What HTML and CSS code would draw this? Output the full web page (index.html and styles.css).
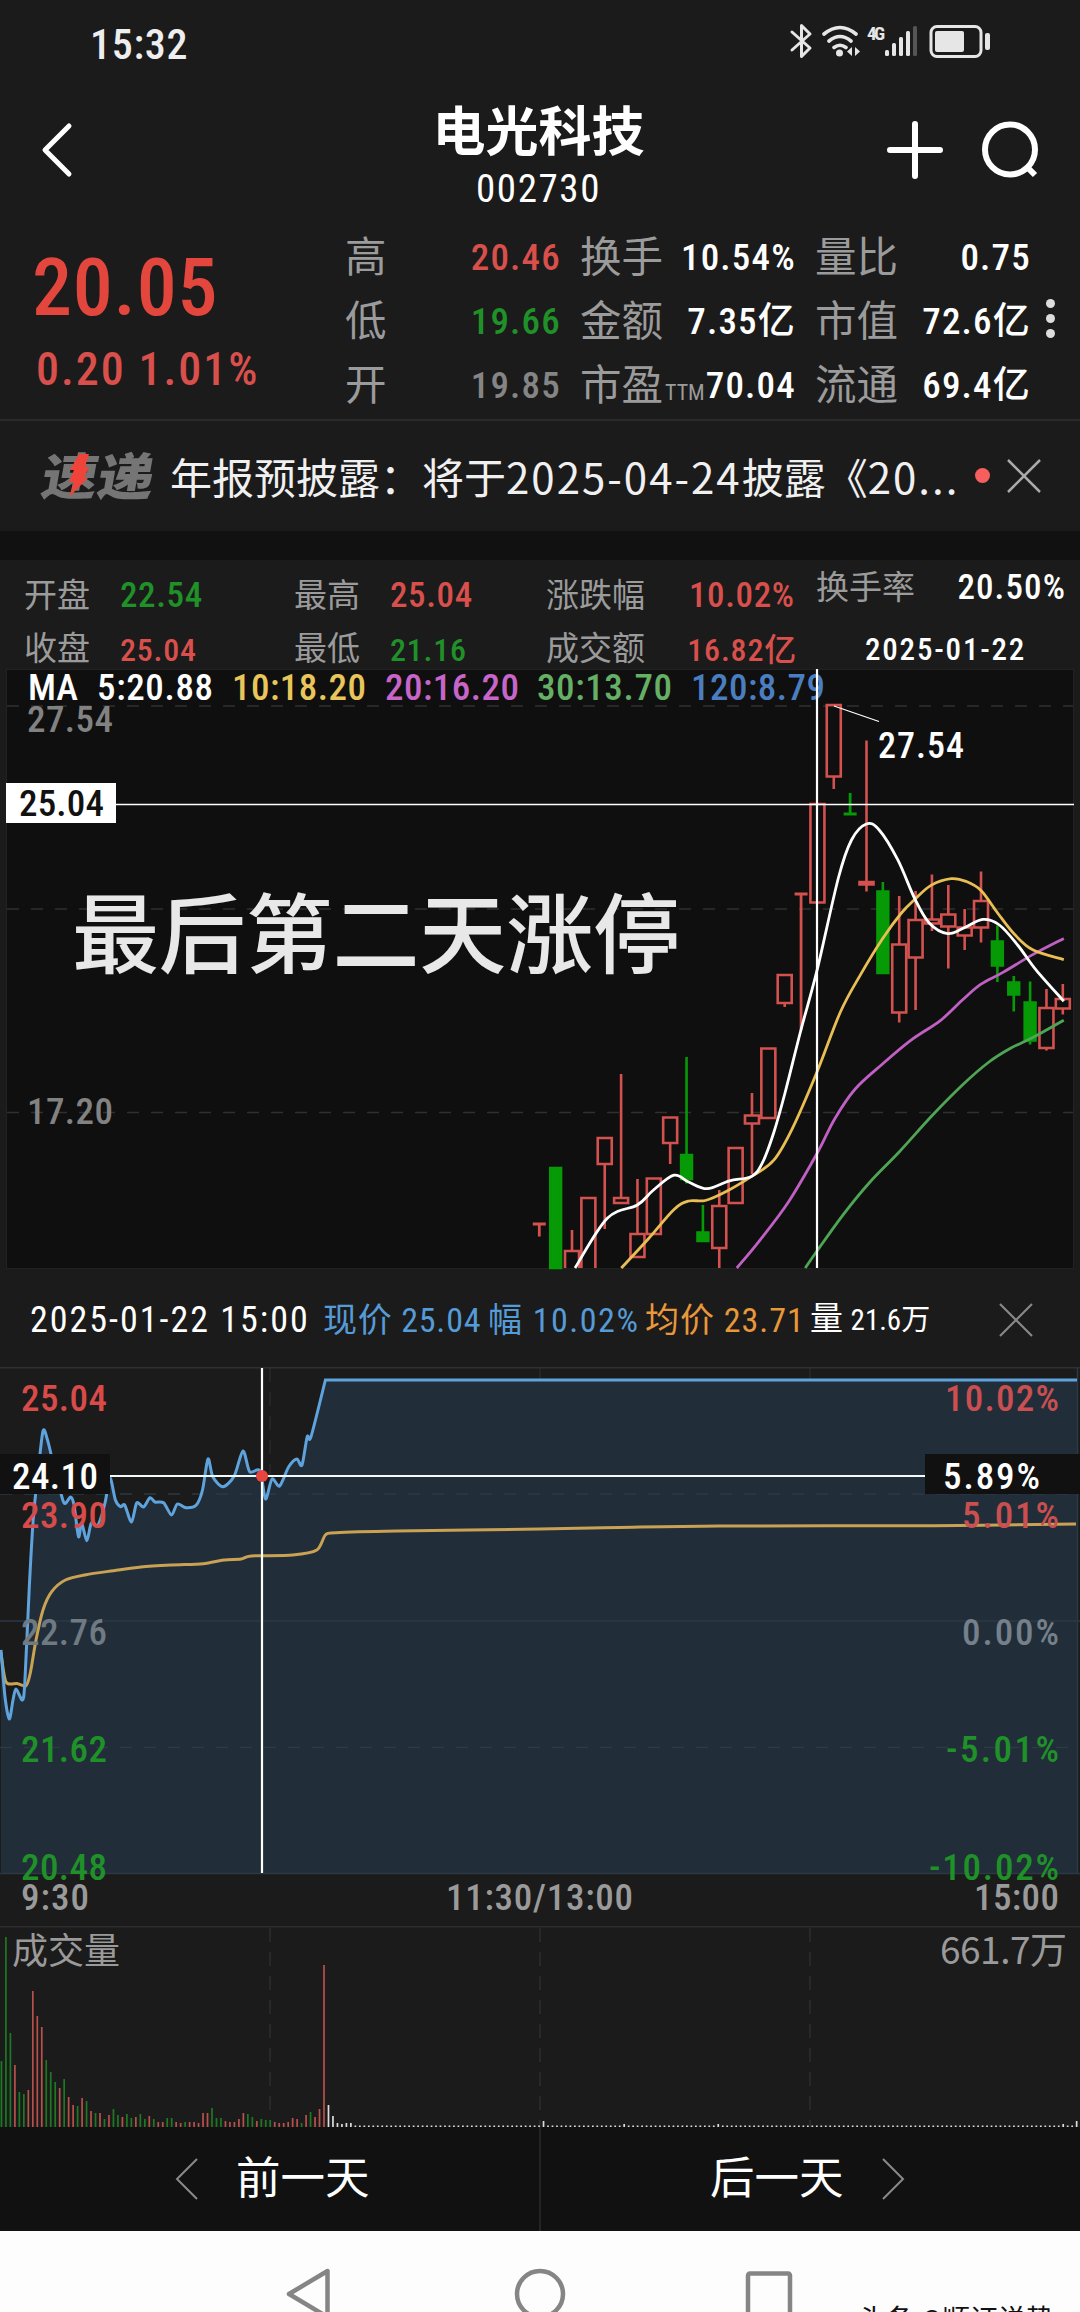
FILE: index.html
```html
<!doctype html>
<html lang="zh-CN">
  <head>
    <title>电光科技 002730</title>
    <meta charset="utf-8">
    <meta name="viewport" content="width=device-width, initial-scale=1">
    <link rel="stylesheet" href="styles.css">
  </head>
  <body>
    <div class="status">
      <span class="clock">15:32</span>
      <svg class="status-icons" width="204" height="40" viewBox="788 20 204 40">
        <g fill="none" stroke="#e6e6e6" stroke-width="3" stroke-linejoin="round" stroke-linecap="round">
          <path d="M792 32l18 16-8.500 8.500V25.500l8.500 8.500-18 16"/>
          <path d="M824 34q16-13 32 0M829 41q11-9 22 0M834 47.500q6-4.500 12 0" stroke-width="3.600"/>
          <rect x="931" y="26.500" width="50" height="30" rx="6"/>
        </g>
        <g fill="#e6e6e6">
          <circle cx="839.500" cy="53" r="3.500"/>
          <path d="M852 47v9l-5-4.500zM855 47v9l5-4.500z"/>
          <rect x="885" y="50" width="4" height="6" rx="1.500"/>
          <rect x="892" y="43" width="4" height="13" rx="1.500"/>
          <rect x="899" y="37" width="4" height="19" rx="1.500"/>
          <rect x="906" y="31" width="4" height="25" rx="1.500"/>
          <rect x="913" y="26" width="4" height="30" rx="1.500" fill="#555"/>
          <rect x="935" y="31" width="29" height="21" rx="2"/>
          <rect x="985" y="33" width="5" height="17" rx="2"/>
          <text x="867" y="39.500" font-size="19" font-weight="700" textLength="18">4G</text>
        </g>
      </svg>
    </div>

    <header class="topbar">
      <svg class="back" width="36" height="56" viewBox="0 0 36 56">
        <path d="M30 4L6 28l24 24" fill="none" stroke="#fff" stroke-width="5" stroke-linecap="round" stroke-linejoin="round"/>
      </svg>
      <div class="title">
        <h1>电光科技</h1>
        <p>002730</p>
      </div>
      <div class="actions">
        <svg width="56" height="60" viewBox="0 0 56 60">
          <path d="M28 4v52M3 30h50" stroke="#fff" stroke-width="6" stroke-linecap="round"/>
        </svg>
        <svg width="60" height="60" viewBox="0 0 60 60">
          <circle cx="30" cy="29.500" r="25" fill="none" stroke="#fff" stroke-width="6"/>
          <path d="M48 48l7 7" stroke="#fff" stroke-width="6"/>
        </svg>
      </div>
    </header>

    <section class="quote">
      <div class="price up">
        <div class="last">20.05</div>
        <div class="change"><span>0.20</span> <span>1.01%</span></div>
      </div>
      <dl>
        <div><dt>高</dt><dd class="up">20.46</dd></div>
        <div><dt>低</dt><dd class="down">19.66</dd></div>
        <div><dt>开</dt><dd class="flat">19.85</dd></div>
      </dl>
      <dl>
        <div><dt>换手</dt><dd>10.54%</dd></div>
        <div><dt>金额</dt><dd>7.35亿</dd></div>
        <div><dt>市盈<small>TTM</small></dt><dd>70.04</dd></div>
      </dl>
      <dl>
        <div><dt>量比</dt><dd>0.75</dd></div>
        <div><dt>市值</dt><dd>72.6亿</dd></div>
        <div><dt>流通</dt><dd>69.4亿</dd></div>
      </dl>
      <div class="more"><i></i><i></i><i></i></div>
    </section>

    <section class="news">
      <svg class="badge" width="120" height="60" viewBox="0 0 120 60">
        <text x="8" y="49" font-size="50" font-weight="900" fill="#757575" textLength="112" lengthAdjust="spacingAndGlyphs" transform="skewX(-10)">速递</text>
        <path d="M39 8h10l-4 13h4l-5 11h4L29 51l5-15h-5l5-12h-4z" fill="#f0443a"/>
      </svg>
      <p>年报预披露：将于<span>2025-04-24</span>披露《<span>20...</span></p>
      <i class="unread"></i>
      <svg width="34" height="34" viewBox="0 0 34 34">
        <path d="M1 1l32 32M33 1L1 33" stroke="#aaa" stroke-width="2.500"/>
      </svg>
    </section>

    <section class="day">
      <dl>
        <div><dt>开盘</dt><dd class="down">22.54</dd></div>
        <div><dt>收盘</dt><dd class="up small">25.04</dd></div>
      </dl>
      <dl>
        <div><dt>最高</dt><dd class="up">25.04</dd></div>
        <div><dt>最低</dt><dd class="down small">21.16</dd></div>
      </dl>
      <dl class="wide">
        <div><dt>涨跌幅</dt><dd class="up">10.02%</dd></div>
        <div><dt>成交额</dt><dd class="up small">16.82亿</dd></div>
      </dl>
      <div class="turnover">
        <p><span>换手率</span><b>20.50%</b></p>
        <p class="date">2025-01-22</p>
      </div>
    </section>

    <svg class="chart" id="kline" width="1080" height="604" viewBox="0 668 1080 604">
      <rect x="6.500" y="669.500" width="1067" height="599" fill="#0f0f0f" stroke="#222"/>
      <path d="M7 706h1066M7 909h1066M7 1112.500h1066" stroke="#303030" stroke-width="1.500" stroke-dasharray="12 12"/>
      <g class="num" font-size="37">
        <text x="28" y="699.500" fill="#fff" textLength="50" lengthAdjust="spacingAndGlyphs">MA</text>
        <text x="97" y="699.500" fill="#fff" textLength="116">5:20.88</text>
        <text x="232" y="699.500" fill="#e8c65a" textLength="134">10:18.20</text>
        <text x="385" y="699.500" fill="#c765c9" textLength="134">20:16.20</text>
        <text x="537" y="699.500" fill="#66b066" textLength="135">30:13.70</text>
        <text x="691" y="699.500" fill="#4a7ec0" textLength="134">120:8.79</text>
        <text x="27" y="731.500" fill="#828282" textLength="86">27.54</text>
        <text x="27" y="1124" fill="#828282" textLength="86">17.20</text>
      </g>
      <text class="note" x="72" y="967" font-size="87" fill="#e8e8e8" textLength="608">最后第二天涨停</text>
      <g id="candles"></g>
      <g id="averages" fill="none"></g>
      <path d="M834 706l45 15.500" stroke="#fff" stroke-width="1.300"/>
      <text class="num" x="878" y="757.500" font-size="36" fill="#fff" textLength="86">27.54</text>
      <path d="M116 804.500h958" stroke="#fff" stroke-width="1.500"/>
      <path d="M817 669v599" stroke="#fff" stroke-width="2.200"/>
      <rect x="6" y="783" width="110" height="40" fill="#fff"/>
      <text class="num" x="19" y="816" font-size="37" fill="#111" textLength="85">25.04</text>
    </svg>

    <section class="minute-info">
      <span class="time">2025-01-22 15:00</span>
      <span class="blue">现价 25.04</span>
      <span class="blue amp">幅 10.02%</span>
      <span class="orange">均价 23.71</span>
      <span class="vol">量 <small>21.6万</small></span>
      <svg width="36" height="36" viewBox="0 0 36 36">
        <path d="M2 2l32 32M34 2L2 34" stroke="#888" stroke-width="2.200"/>
      </svg>
    </section>

    <svg class="chart" id="minute" width="1080" height="559" viewBox="0 1367 1080 559">
      <path d="M0 1367.500h1080" stroke="#303030" stroke-width="2"/>
      <path d="M270 1368v505M540 1368v505M810 1368v505" stroke="#303030" stroke-dasharray="14 10"/>
      <path id="area" fill="#212e3a"/>
      <path d="M0 1494h1077M0 1747.500h1077" stroke="#2d3a45" stroke-width="1.500" stroke-dasharray="12 12"/>
      <path d="M0 1621h1080M0 1873.500h1080M1077.500 1368v505" stroke="#2c3843" stroke-width="1.500"/>
      <path id="avg" fill="none" stroke="#c9a253" stroke-width="3"/>
      <path id="price" fill="none" stroke="#5fa3dc" stroke-width="3"/>
      <g class="num" font-size="37">
        <text x="21" y="1411" fill="#d84b48" textLength="86">25.04</text>
        <text x="21" y="1528" fill="#d84b48" textLength="86">23.90</text>
        <text x="21" y="1645" fill="#6f7a82" textLength="86">22.76</text>
        <text x="21" y="1762" fill="#1f9128" textLength="86">21.62</text>
        <text x="21" y="1880" fill="#1f9128" textLength="86">20.48</text>
        <text x="945" y="1411" fill="#c94f50" textLength="114">10.02%</text>
        <text x="962" y="1528" fill="#c94f50" textLength="97">5.01%</text>
        <text x="962" y="1645" fill="#75808a" textLength="97">0.00%</text>
        <text x="946" y="1762" fill="#1f9128" textLength="113">-5.01%</text>
        <text x="929" y="1880" fill="#1f9128" textLength="130">-10.02%</text>
        <text x="21" y="1910" fill="#9a9a9a" textLength="68">9:30</text>
        <text x="446" y="1910" fill="#9a9a9a" textLength="187">11:30/13:00</text>
        <text x="974" y="1910" fill="#9a9a9a" textLength="85">15:00</text>
      </g>
      <path d="M110 1476h816" stroke="#f4fafa" stroke-width="2.200"/>
      <path d="M262 1368v505" stroke="#fff" stroke-width="2.200"/>
      <circle cx="262" cy="1476" r="6" fill="#e8453f"/>
      <path d="M0 1454h110v40H0zM925 1454h155v40H925z" fill="#111"/>
      <g class="num" font-size="37" fill="#fff">
        <text x="12" y="1488.500" textLength="86">24.10</text>
        <text x="943" y="1488.500" textLength="97">5.89%</text>
      </g>
    </svg>

    <svg class="chart" id="volume" width="1080" height="201" viewBox="0 1926 1080 201">
      <path d="M0 1926.500h1080" stroke="#2d2d2d" stroke-width="2"/>
      <path d="M270 1928v199M540 1928v199M810 1928v199" stroke="#2e2e2e" stroke-width="1.500" stroke-dasharray="14 10"/>
      <g id="bars"></g>
      <g fill="#9a9a9a">
        <text class="cjk" x="12" y="1964" font-size="36">成交量</text>
        <text class="cjk" x="940" y="1964" font-size="37" textLength="127">661.7万</text>
      </g>
    </svg>

    <nav class="days">
      <a>
        <svg width="24" height="42" viewBox="0 0 24 42"><path d="M22 1L2 21l20 20" fill="none" stroke="#8a8a8a" stroke-width="2"/></svg>
        前一天
      </a>
      <a>
        后一天
        <svg width="24" height="42" viewBox="0 0 24 42"><path d="M2 1l20 20L2 41" fill="none" stroke="#8a8a8a" stroke-width="2"/></svg>
      </a>
    </nav>

    <footer class="system">
      <svg width="520" height="81" viewBox="280 2231 520 81">
        <g fill="none" stroke="#858585" stroke-width="4.500" stroke-linejoin="round">
          <path d="M327.500 2271v46L289 2294z"/>
          <circle cx="540" cy="2294" r="23"/>
          <rect x="748" y="2273.500" width="42" height="44" rx="2"/>
        </g>
      </svg>
      <span>头条 @顺证说势</span>
    </footer>

    <script src="charts.js"></script>
  </body>
</html>
```
FILE: styles.css
```css
* {
  box-sizing: border-box;
  margin: 0;
  padding: 0;
}
body {
  width: 1080px;
  height: 2312px;
  overflow: hidden;
  background: #1b1b1b;
  color: #fff;
  font-family: "Roboto Condensed", "Noto Sans CJK SC", sans-serif;
}
svg {
  display: block;
  flex: none;
}
i, b {
  font-style: normal;
}
.up { color: #d84f4b; }
.down { color: #1f9128; }
.flat { color: #858585; }
.num { font-weight: 500; }
.cjk { font-family: "Noto Sans CJK SC", sans-serif; }

/* system status */
.status {
  display: flex;
  justify-content: space-between;
  align-items: center;
  height: 88px;
  padding: 0 88px 0 90px;
}
.clock {
  font-size: 42px;
  font-weight: 500;
  letter-spacing: .7px;
  color: #eee;
}
.status-icons {
  margin-top: -8px;
}

.topbar {
  display: flex;
  justify-content: space-between;
  height: 117px;
  padding: 0 40px 0 39px;
}
.back {
  margin-top: 34px;
}
.title {
  margin-left: 115px;
  text-align: center;
}
.title h1 {
  margin-top: 8px;
  font-size: 53px;
  line-height: 74px;
  font-weight: 700;
}
.title p {
  font-size: 39px;
  line-height: 38px;
  letter-spacing: 1.600px;
}
.actions {
  display: flex;
  gap: 37px;
  margin-top: 32px;
}

/* quote */
.quote {
  display: flex;
  height: 216px;
  padding: 21px 0 0 32px;
  border-bottom: 2px solid #2b2b2b;
}
.price {
  width: 313px;
  font-weight: 500;
}
.last {
  font-size: 80px;
  line-height: 125px;
  letter-spacing: .8px;
  color: #e2463d;
}
.change {
  padding-left: 4px;
  font-size: 46px;
  line-height: 36px;
  letter-spacing: 2px;
}
.quote dl {
  width: 216px;
  margin-right: 19px;
}
.quote dl > div {
  display: flex;
  justify-content: space-between;
  height: 64px;
  line-height: 64px;
  white-space: nowrap;
}
dt {
  color: #9b9b9b;
  font-weight: 400;
}
.quote dt {
  font-size: 41.500px;
}
.quote dt small {
  margin-left: 2px;
  font-size: 22px;
}
.quote dd {
  font-size: 37px;
  font-weight: 500;
  letter-spacing: 1.2px;
}
.more {
  display: flex;
  flex-direction: column;
  gap: 6px;
  margin: 73px 0 0 -4px;
}
.more i {
  width: 9px;
  height: 9px;
  border-radius: 50%;
  background: #ddd;
}

/* news */
.news {
  display: flex;
  align-items: center;
  height: 110px;
  padding-left: 40px;
}
.badge {
  margin-right: 10px;
}
.news p {
  width: 788px;
  font: 42px/60px "Noto Sans CJK SC", sans-serif;
  color: #f0f0f0;
  white-space: nowrap;
  margin-top: -1px;
}
.news p span {
  letter-spacing: 2px;
}
.unread {
  width: 15px;
  height: 15px;
  margin: -2px 17px 0;
  border-radius: 50%;
  background: #f75f5e;
}

/* selected day */
.day {
  display: flex;
  height: 137px;
  padding: 10px 0 0 24px;
  border-top: 29px solid #111;
}
.day dl {
  width: 270px;
}
.day dl.wide {
  width: 251px;
  margin-left: -18px;
}
.day dl > div {
  display: flex;
  height: 53px;
  line-height: 52px;
  white-space: nowrap;
}
.day dt {
  width: 96px;
  font-size: 33px;
}
.day .wide dt {
  width: 143px;
}
.day dd {
  font-size: 35px;
  font-weight: 500;
  letter-spacing: .6px;
}
.day dd.small {
  padding-top: 1px;
  font-size: 32px;
  letter-spacing: .8px;
}
.turnover {
  width: 250px;
  margin-left: 19px;
}
.turnover p {
  display: flex;
  justify-content: space-between;
  height: 52px;
  font-size: 33px;
  line-height: 36px;
  color: #9b9b9b;
}
.turnover b {
  font-size: 35px;
  font-weight: 500;
  letter-spacing: 1.1px;
  color: #fff;
}
.turnover .date {
  padding: 2px 0 0 49px;
  font-size: 31px;
  line-height: 52px;
  font-weight: 500;
  letter-spacing: 1.8px;
  color: #fff;
  white-space: nowrap;
}

.note {
  font-family: "Noto Sans CJK SC", sans-serif;
  font-weight: 500;
}

/* minute chart legend */
.minute-info {
  display: flex;
  align-items: center;
  height: 95px;
  padding-left: 30px;
  font-size: 35px;
  line-height: 50px;
  white-space: nowrap;
}
.minute-info span {
  font-size: 33px;
}
.minute-info .time {
  width: 293px;
  font-size: 36px;
  letter-spacing: 2px;
}
.minute-info .blue {
  width: 165px;
  font-size: 34px;
  color: #559bd8;
  letter-spacing: .8px;
}
.minute-info .amp {
  width: 157px;
  letter-spacing: 1.5px;
}
.minute-info .orange {
  width: 165px;
  font-size: 34px;
  color: #e8973a;
  letter-spacing: 1px;
}
.minute-info .vol {
  width: 188px;
}
.minute-info small {
  font-size: 29px;
}

/* previous / next day */
.days {
  display: flex;
  height: 104px;
  background: #111;
}
.days a {
  display: flex;
  flex: none;
  width: 539px;
  align-items: center;
  gap: 37px;
  padding-left: 175px;
  font-size: 44.500px;
  line-height: 100px;
}
.days a + a {
  width: 541px;
  padding-left: 169px;
  border-left: 2px solid #242424;
}

.system {
  display: flex;
  height: 81px;
  padding-left: 280px;
  background: #fdfdfd;
  color: #111;
  overflow: hidden;
}
.system span {
  margin: 73px 0 0 58px;
  font-size: 28px;
  line-height: 34px;
  white-space: nowrap;
}
```
FILE: charts.js
```js
const RED = '#d3524f'
const GREEN = '#069a06'

// type, high, body top, body bottom, low
const candles = [
  ['r', 1224, 1224, 1224, 1236.5], ['g', 1168, 1168, 1268, 1268],
  ['r', 1230, 1251, 1270, 1270], ['r', 1198, 1198, 1270, 1270],
  ['r', 1138, 1138, 1164, 1229], ['r', 1074, 1198, 1203, 1203],
  ['r', 1179, 1234, 1257, 1257], ['r', 1178.5, 1178.5, 1234, 1234],
  ['r', 1117.5, 1117.5, 1143, 1164], ['g', 1057, 1155, 1179, 1183.5],
  ['g', 1205, 1232.5, 1241, 1241], ['r', 1190, 1206, 1248, 1268],
  ['r', 1148, 1148, 1203, 1203], ['r', 1093, 1115.5, 1123.5, 1174],
  ['r', 1048.5, 1048.5, 1118, 1118], ['r', 975, 975, 1003, 1007],
  ['r', 894, 894, 894, 1030.5], ['r', 804, 804, 902.5, 902.5],
  ['r', 705, 705, 776.5, 789], ['g', 793, 814, 814, 814],
  ['r', 740.5, 882, 884.5, 891.5], ['g', 882, 891.5, 973, 973],
  ['r', 896, 944.5, 1012.5, 1022.5], ['r', 891, 920, 957.5, 1010],
  ['r', 874.5, 919.5, 923.5, 931], ['r', 885, 914.5, 926.5, 968.5],
  ['r', 909, 927.5, 935.5, 950], ['r', 871.5, 901, 927.5, 942.5],
  ['g', 925.5, 941.5, 965.5, 982], ['g', 976, 982.5, 994.5, 1011.5],
  ['g', 981.5, 1002.5, 1040.5, 1044.5], ['r', 989, 1008, 1048, 1050.5],
  ['r', 984, 999, 1008.5, 1014.5],
]

const averages = {
  '#4fa556': [[805.2, 1268], [817, 1251], [844, 1213.6], [870, 1182], [899.6, 1151.5], [931.7, 1116], [962.4, 1085], [988.3, 1062.5], [1010.5, 1048.3], [1032.7, 1037.6], [1063.8, 1020.2]],
  '#c060c4': [[736.8, 1268], [759, 1241.3], [788.6, 1201.7], [817, 1153.5], [834.8, 1118.7], [855.2, 1089], [882.5, 1064], [910.7, 1040.4], [940.3, 1020.6], [962.4, 1000], [981, 984.2], [1003, 972.4], [1032.7, 954.6], [1063.8, 938.4]],
  '#e9be54': [[621.3, 1268], [648, 1239.3], [674, 1209.6], [688.7, 1201], [705.3, 1200.5], [725.7, 1191.8], [751.6, 1176.4], [773.8, 1160.2], [792.3, 1128.6], [817, 1072], [840.4, 1012], [860.7, 974.4], [882.5, 938.8], [901.4, 913], [915, 899.2], [931, 885.4], [951.3, 878.7], [966, 881.4], [981, 890.5], [997.6, 913], [1014.2, 934], [1032.7, 949.8], [1063.8, 959.7]],
  '#fff': [[575, 1268], [607.3, 1218.3], [637.3, 1205], [653.5, 1190], [674, 1175.2], [688.7, 1182], [707.2, 1188.7], [729.4, 1180.8], [751.6, 1176.4], [762.7, 1162.2], [773.8, 1132.5], [785, 1093], [800.8, 1030.5], [817, 970.4], [838.5, 877.5], [851.5, 840], [866.3, 824], [879.2, 830], [897.7, 859.7], [915, 899.2], [929.2, 923], [947.6, 933.6], [964.3, 927.7], [982.8, 919.4], [999.4, 925], [1018, 945.5], [1036.4, 970.4], [1063.8, 1001.2]],
}

const price = [[1, 1650], [5, 1697], [9.3, 1719], [13, 1700], [16, 1689], [22.4, 1700], [24.8, 1683], [29.3, 1587], [33.4, 1517], [38, 1473], [43, 1431], [47.5, 1440], [51.7, 1457], [57, 1477], [64, 1503], [70.6, 1497], [74, 1505], [78.5, 1536.7], [81.6, 1523], [86.8, 1540.7], [91.3, 1523], [98, 1525], [105, 1503], [110, 1478], [115.4, 1500], [120.5, 1506.7], [124.7, 1505], [131.5, 1522], [136.7, 1503], [143.6, 1507], [150, 1497.7], [155, 1502], [163.6, 1502.7], [171.5, 1515], [177.3, 1504], [186, 1507.7], [196.3, 1505], [202.5, 1490], [208, 1459], [212.8, 1476.7], [223, 1486.7], [234.2, 1476], [243, 1451], [249.7, 1471.7], [260, 1470.7], [265.5, 1499], [272, 1479], [279.6, 1486], [288.6, 1467], [296.8, 1459], [302, 1465], [307.2, 1436.7], [311, 1436.7], [325.4, 1380]]

const avg = [[1, 1653], [6, 1682], [17, 1683.5], [26, 1685.7], [30.3, 1673], [36, 1640], [43, 1610], [51.7, 1591.7], [65.4, 1580], [86, 1574.7], [113.6, 1570.7], [141, 1567], [172, 1565], [203, 1563.7], [223.8, 1560], [241, 1559], [251.4, 1556], [292.7, 1555], [316.8, 1550], [325.4, 1535], [335.7, 1532.7], [396, 1531], [540, 1529], [619, 1527.5], [719, 1526], [934, 1525.7], [1076, 1524]]

const volume = 'g66 g190 g94 r62 g35 g33 r37 r136 r111 r100 g67 g55 g45 r39 g48 r30 r22 g21 r29 g26 r16 g14 r14 g8 r12 g18 g12 r10 g13 g9 r10 g13 g8 r11 g8 r5 r5 g9 g9 r5 r4 g5 r5 r5 r4 r14 r14 g19 g9 g9 r6 r5 r5 r8 r14 g13 g10 r6 g8 g7 g7 r5 r4 r4 r5 r9 r8 g4 r12 g15 r10 r18 r162 w22 w11 w4 w3 w4 w4'.split(' ')
const spikes = {121: 6, 139: 3, 160: 3, 237: 3, 240: 6}

function smooth(points, k = 0.14) {
  let d = `M${points[0]}`
  for (let i = 0; i < points.length - 1; i++) {
    const p0 = points[i - 1] || points[i]
    const [p1, p2] = [points[i], points[i + 1]]
    const p3 = points[i + 2] || p2
    d += `C${p1[0] + (p2[0] - p0[0]) * k} ${p1[1] + (p2[1] - p0[1]) * k}`
    d += ` ${p2[0] - (p3[0] - p1[0]) * k} ${p2[1] - (p3[1] - p1[1]) * k} ${p2}`
  }
  return d
}

const $ = id => document.getElementById(id)

$('candles').innerHTML = candles.map(([type, high, top, bottom, low], i) => {
  const x = 539.3 + i * 16.36
  const color = type === 'r' ? RED : GREEN
  const wicks = `M${x} ${high}V${top}M${x} ${bottom}V${low}`
  if (top === bottom) {
    return `<path d="${wicks}M${x - 6.5} ${top}h13" stroke="${color}" stroke-width="2.8"/>`
  }
  const fill = type === 'r' ? 'none' : color
  const end = Math.min(bottom, 1268)
  const half = type === 'r' ? 7 : 5.4
  const body = bottom > 1268
    ? `M${x - half} ${end}V${top}h${half * 2}V${end}`
    : `M${x - half} ${top}h${half * 2}V${end}h${-half * 2}z`
  return `<path d="${wicks}${body}" fill="${fill}" stroke="${color}" stroke-width="2.6"/>`
}).join('')

$('averages').innerHTML = Object.entries(averages).map(([color, points]) =>
  `<path d="${smooth(points, 0.17)}" stroke="${color}" stroke-width="2.8"/>`
).join('')

const line = smooth(price) + 'L1077 1380'
$('price').setAttribute('d', line)
$('area').setAttribute('d', line + 'V1873H1z')
$('avg').setAttribute('d', smooth(avg))

const colors = {r: '#b8504c', g: '#1d7a22', w: '#ddd'}
let bars = ''
for (let i = 0; i <= 240; i++) {
  const [type, ...n] = volume[i] || 'w' + (spikes[i] || 1.5)
  const h = +n.join('')
  bars += `<rect x="${0.6 + i * 4.48}" y="${2127 - h}" width="1.7" height="${h}" fill="${colors[type]}"/>`
}
$('bars').innerHTML = bars
```
